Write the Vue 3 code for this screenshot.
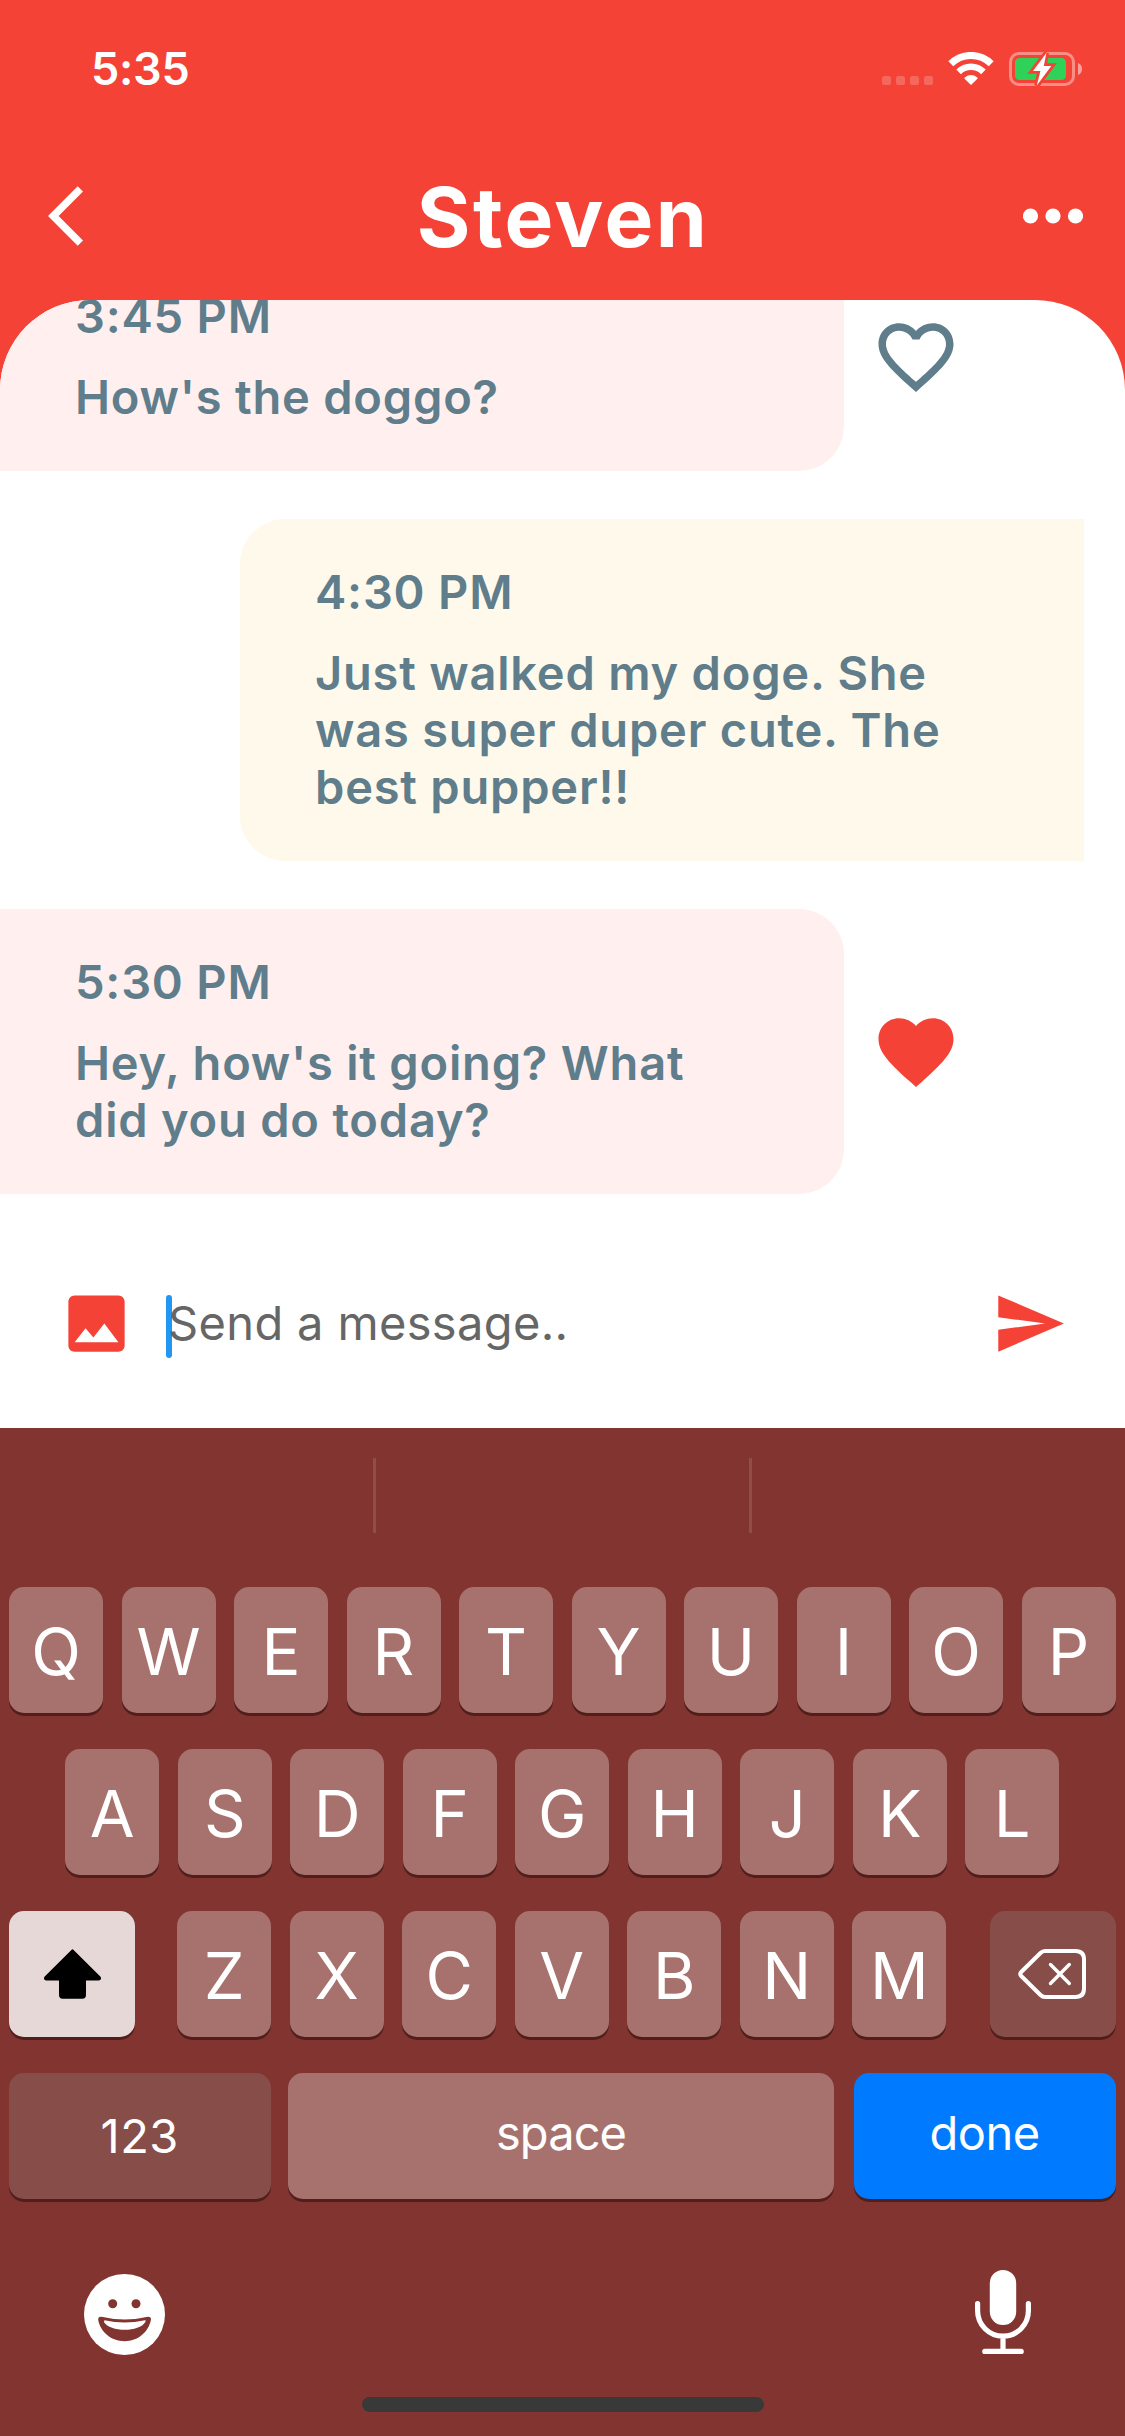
<script setup>
const messages = [
  { time: '3:45 PM', text: "How's the doggo?", mine: false, liked: false },
  { time: '4:30 PM', text: 'Just walked my doge. She was super duper cute. The best pupper!!', mine: true },
  { time: '5:30 PM', text: "Hey, how's it going? What did you do today?", mine: false, liked: true },
]
const topRow = 'QWERTYUIOP'.split('')
const homeRow = 'ASDFGHJKL'.split('')
const bottomRow = 'ZXCVBNM'.split('')
</script>

<template>
  <div class="screen">
    <header class="header">
      <div class="status">
        <span class="clock">5:35</span>
        <div class="indicators">
          <div class="signal"><i v-for="n in 4" :key="n"></i></div>
          <svg class="wifi" width="46" height="34" viewBox="0 0 46 34">
            <g fill="none" stroke="#fff">
              <path d="M2.8 11.8A28.5 28.5 0 0 1 43.2 11.8" stroke-width="7" />
              <path d="M10.6 19.8A17.7 17.7 0 0 1 35.4 19.8" stroke-width="6.6" />
            </g>
            <path d="M23 32L17.2 26.2Q23 21.6 28.8 26.2Z" fill="#fff" stroke="#fff" stroke-width="1.6" stroke-linejoin="round" />
          </svg>
          <svg class="battery" width="74" height="34" viewBox="0 0 74 34">
            <rect x="1.5" y="1.5" width="63" height="31" rx="8.5" fill="none" stroke="#fff" stroke-opacity=".4" stroke-width="3" />
            <path d="M69 11Q73 12.5 73 17T69 23Z" fill="#fff" fill-opacity=".5" />
            <rect x="6" y="6" width="51" height="22" rx="4.5" fill="#30d158" />
            <path d="M37.4 1L24 18.9H31.4L27.8 33.6L42.3 14H34.8Z" fill="#f44336" stroke="#f44336" stroke-width="5.5" />
            <path d="M37.4 1L24 18.9H31.4L27.8 33.6L42.3 14H34.8Z" fill="#fff" />
          </svg>
        </div>
      </div>
      <div class="titlebar">
        <svg class="back" width="36" height="72" viewBox="0 0 12 24">
          <path d="M11.67 3.87L9.9 2.1 0 12l9.9 9.9 1.77-1.77L3.54 12z" fill="#fff" />
        </svg>
        <h1>Steven</h1>
        <svg class="more" width="60" height="16" viewBox="0 0 60 16" fill="#fff">
          <circle cx="7.5" cy="8" r="7.6" /><circle cx="30" cy="8" r="7.6" /><circle cx="52.5" cy="8" r="7.6" />
        </svg>
      </div>
    </header>

    <main class="chat">
      <div v-for="m in messages" :key="m.time" class="row" :class="{ mine: m.mine }">
        <div class="bubble">
          <div class="time">{{ m.time }}</div>
          <div class="text">{{ m.text }}</div>
        </div>
        <svg v-if="!m.mine" class="heart" width="90" height="90" viewBox="0 0 24 24">
          <path v-if="m.liked" fill="#f44336" d="M12 21.35l-1.45-1.32C5.4 15.36 2 12.28 2 8.5 2 5.42 4.42 3 7.5 3c1.74 0 3.41.81 4.5 2.09C13.09 3.81 14.76 3 16.5 3 19.58 3 22 5.42 22 8.5c0 3.78-3.4 6.86-8.55 11.54L12 21.35z" />
          <path v-else fill="#607d8b" d="M16.5 3c-1.74 0-3.41.81-4.5 2.09C10.91 3.81 9.24 3 7.5 3 4.42 3 2 5.42 2 8.5c0 3.78 3.4 6.86 8.55 11.54L12 21.35l1.45-1.32C18.6 15.36 22 12.28 22 8.5 22 5.42 19.58 3 16.5 3zm-4.4 15.55l-.1.1-.1-.1C7.14 14.24 4 11.39 4 8.5 4 6.5 5.5 5 7.5 5c1.54 0 3.04.99 3.57 2.36h1.87C13.46 5.99 14.96 5 16.5 5c2 0 3.5 1.5 3.5 3.5 0 2.89-3.14 5.74-7.9 10.05z" />
        </svg>
      </div>
    </main>

    <div class="composer">
      <svg width="75" height="75" viewBox="0 0 24 24" fill="#f44336">
        <path d="M21 19V5c0-1.1-.9-2-2-2H5c-1.1 0-2 .9-2 2v14c0 1.1.9 2 2 2h14c1.1 0 2-.9 2-2zM8.5 13.5l2.5 3.01L14.5 12l4.5 6H5l3.5-4.5z" />
      </svg>
      <div class="field"><span class="caret"></span><span class="hint">Send a message..</span></div>
      <svg width="75" height="75" viewBox="0 0 24 24" fill="#f44336">
        <path d="M2.01 21L23 12 2.01 3 2 10l15 2-15 2z" />
      </svg>
    </div>

    <section class="keyboard">
      <div class="suggestions"><span></span><span></span><span></span></div>
      <div class="keys">
        <div class="keyrow"><div v-for="k in topRow" :key="k" class="key">{{ k }}</div></div>
        <div class="keyrow"><div v-for="k in homeRow" :key="k" class="key">{{ k }}</div></div>
        <div class="keyrow spread">
          <div class="key shift">
            <svg width="57" height="50" viewBox="0 0 57 50">
              <path d="M27.4.9Q28.5-.2 29.6.9L56.3 27.6Q57.6 29.2 56.6 30.5 56 31.5 54.5 31.5H42V46Q42 49.7 38.4 49.7H18.6Q15 49.7 15 46V31.5H2.5Q1 31.5.4 30.5-.6 29.2.7 27.6Z" />
            </svg>
          </div>
          <div class="letters"><div v-for="k in bottomRow" :key="k" class="key">{{ k }}</div></div>
          <div class="key dark erase">
            <svg width="69" height="50" viewBox="0 0 69 50" fill="none" stroke="#fff" stroke-linecap="round" stroke-linejoin="round">
              <path stroke-width="4" d="M27 2H57.5Q66 2 66 10.5V39.5Q66 48 57.5 48H27Q24.5 48 22.5 46L3.2 27Q1.2 25 3.2 23L22.5 4Q24.5 2 27 2Z" />
              <path stroke-width="3.4" d="M32.5 15.5L51.3 34.5M51.3 15.5L32.5 34.5" />
            </svg>
          </div>
        </div>
        <div class="keyrow spread">
          <div class="key dark word num">123</div>
          <div class="key word space">space</div>
          <div class="key word done">done</div>
        </div>
      </div>
      <div class="tray">
        <svg width="81" height="81" viewBox="0 0 81 81">
          <circle cx="40.5" cy="40.5" r="40.5" fill="#fff" />
          <g fill="#823530">
            <circle cx="28.7" cy="29.8" r="4.5" /><circle cx="52" cy="29.8" r="4.5" />
            <path d="M17.5 42.7Q40.5 48.3 64 42.7 67.4 42.6 66.9 46C64.5 58 54 67.2 40.6 67.2S16.5 58 14.2 46Q13.9 42.3 17.5 42.7Z" />
          </g>
          <path d="M20.5 46.2Q40.5 51 61 46.2 62.5 46.4 61.3 48C55.5 58.4 26 58.4 19.9 48 19 46.3 20.5 46.2Z" fill="#fff" />
        </svg>
        <svg width="56" height="84" viewBox="0 0 56 84">
          <rect x="14.8" y="0" width="26.4" height="55" rx="13.2" fill="#fff" />
          <path d="M2.6 33.5V40.8A25.4 25.4 0 0 0 53.4 40.8V33.5M28 66V81M9.8 81.4H46.2" fill="none" stroke="#fff" stroke-width="5.2" stroke-linecap="round" />
        </svg>
      </div>
      <div class="home"></div>
    </section>
  </div>
</template>

<style>
body { margin: 0; }
</style>

<style scoped>
.screen {
  width: 1125px;
  height: 2436px;
  display: flex;
  flex-direction: column;
  overflow: hidden;
  background: linear-gradient(#f44336 600px, #fff 600px);
  font-family: Inter, "Liberation Sans", sans-serif;
}
svg { display: block; flex: none; }
.header { height: 300px; flex: none; color: #fff; }
.status {
  height: 132px;
  display: flex;
  justify-content: space-between;
  padding: 0 42px 0 91px;
}
.clock { margin-top: 41px; font-size: 45px; line-height: 56px; font-weight: 600; letter-spacing: -0.3px; }
.indicators { display: flex; height: 34px; margin-top: 52px; }
.signal { display: flex; gap: 5px; align-items: flex-end; margin: 0 15px 1px 0; }
.signal i { width: 9px; height: 9px; border-radius: 2.5px; background: rgba(255, 255, 255, .2); }
.battery { margin-left: 15px; }
.titlebar {
  height: 168px;
  display: grid;
  grid-template-columns: 1fr auto 1fr;
  align-items: center;
  box-sizing: border-box;
  padding: 0 42px 0 48px;
}
.titlebar h1 {
  margin: 3px 0 0 -5px;
  font-size: 82px;
  line-height: 98px;
  font-weight: 700;
  letter-spacing: 2.4px;
}
.more { justify-self: end; }
.chat {
  height: 918px;
  flex: none;
  box-sizing: border-box;
  padding-bottom: 24px;
  display: flex;
  flex-direction: column;
  justify-content: flex-end;
  gap: 48px;
  overflow: hidden;
  border-radius: 90px 90px 0 0;
  background: #fff;
}
.row { display: flex; align-items: center; gap: 27px; flex: none; }
.bubble {
  width: 843.75px;
  box-sizing: border-box;
  padding: 44px 75px 46px;
  border-radius: 0 45px 45px 0;
  background: #ffefee;
  color: #607d8b;
  font-size: 47px;
  line-height: 57px;
  font-weight: 600;
  letter-spacing: .8px;
}
.mine .bubble { margin-left: 240px; border-radius: 45px 0 0 45px; background: #fef9eb; }
.time { margin-bottom: 24px; }
.composer {
  height: 210px;
  flex: none;
  display: flex;
  align-items: center;
  box-sizing: border-box;
  padding: 0 58.5px;
  background: #fff;
}
.field {
  flex: 1;
  display: flex;
  align-items: center;
  margin-left: 32.5px;
  color: #666;
  font-size: 47px;
  line-height: 57px;
  letter-spacing: .35px;
}
.hint { margin-top: -2px; }
.caret { width: 6px; height: 63px; margin: 6px -4px 0 0; border-radius: 3px; background: #2196f3; }
.keyboard { flex: 1; background: #823530; color: #fff; }
.suggestions { display: flex; height: 159px; box-sizing: border-box; padding: 30px 0 54px; }
.suggestions span { flex: 1; box-sizing: border-box; border-right: 3px solid #924d48; }
.suggestions span:last-child { border: 0; }
.keys { display: flex; flex-direction: column; gap: 36px; padding: 0 9.5px 0 9px; }
.keyrow, .letters { display: flex; justify-content: center; gap: 18.5px; }
.letters { margin-right: 1px; }
.spread { justify-content: space-between; gap: 0; }
.key {
  width: 94px;
  height: 126px;
  box-sizing: border-box;
  padding-top: 3px;
  display: flex;
  align-items: center;
  justify-content: center;
  border-radius: 15px;
  background: #a7726e;
  box-shadow: 0 3px 0 #501f1c;
  font-size: 65px;
  line-height: 78px;
  font-weight: 400;
}
.key.shift, .key.erase { width: 126px; padding-top: 0; }
.key.shift { background: #e6d8d6; }
.key.dark { background: #874e49; }
.key.word { font-size: 47px; line-height: 57px; padding-top: 0; }
.key.num { width: 261.5px; padding-bottom: 2px; letter-spacing: .5px; }
.key.space { width: 546px; margin-right: 2px; padding-bottom: 8px; letter-spacing: -.9px; }
.key.done { width: 262px; padding-bottom: 8px; letter-spacing: -.5px; background: #007aff; }
.tray { display: flex; justify-content: space-between; align-items: flex-start; padding: 71px 94px 0 84px; }
.tray svg:first-child { margin-top: 4px; }
.home { width: 402px; height: 15px; margin: 42px auto 0; border-radius: 8px; background: #393939; }
</style>
